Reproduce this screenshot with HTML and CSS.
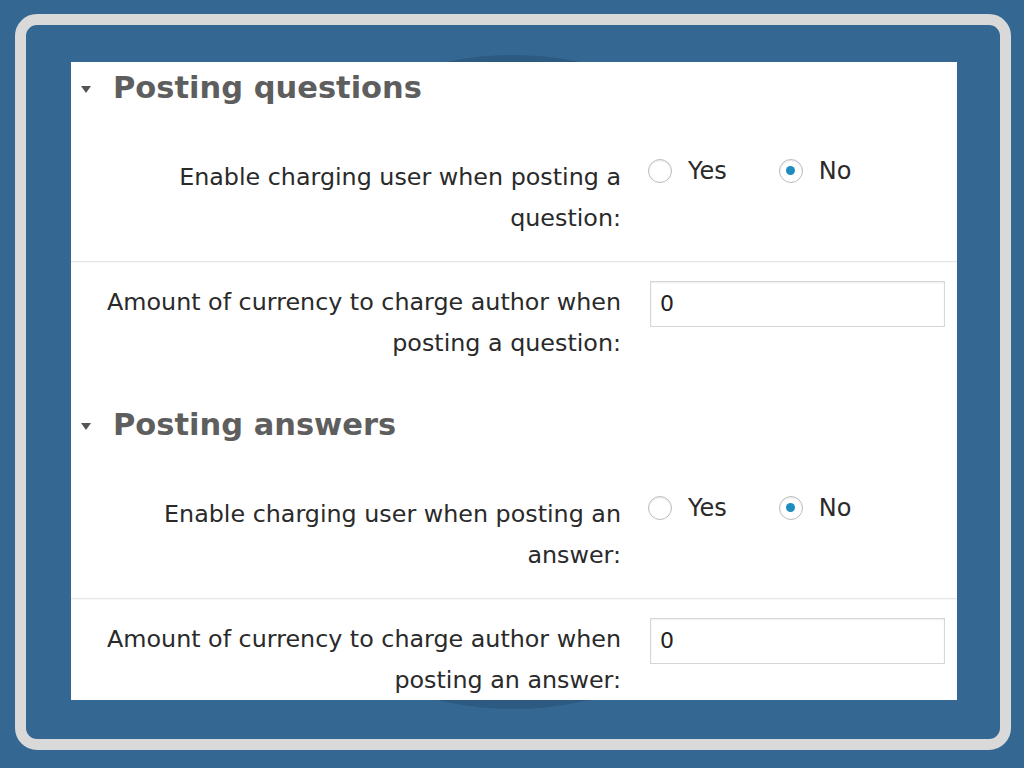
FILE: index.html
```html
<!DOCTYPE html>
<html>
<head>
<meta charset="utf-8">
<link rel="stylesheet" href="styles.css">
</head>
<body>
<div class="frame">
  <div class="disc"></div>
  <div class="panel">
    <section class="group first">
      <h2 class="group-title"><span class="caret"></span>Posting questions</h2>
      <div class="row sep">
        <div class="label">Enable charging user when posting a question:</div>
        <div class="control radios">
          <span class="opt"><span class="radio"></span>Yes</span>
          <span class="opt"><span class="radio on"></span>No</span>
        </div>
      </div>
      <div class="row">
        <div class="label">Amount of currency to charge author when posting a question:</div>
        <div class="control"><div class="input">0</div></div>
      </div>
    </section>
    <section class="group">
      <h2 class="group-title"><span class="caret"></span>Posting answers</h2>
      <div class="row sep">
        <div class="label">Enable charging user when posting an answer:</div>
        <div class="control radios">
          <span class="opt"><span class="radio"></span>Yes</span>
          <span class="opt"><span class="radio on"></span>No</span>
        </div>
      </div>
      <div class="row">
        <div class="label">Amount of currency to charge author when posting an answer:</div>
        <div class="control"><div class="input">0</div></div>
      </div>
    </section>
  </div>
</div>
</body>
</html>
```

FILE: styles.css
```css
* { box-sizing: border-box; }
html, body { margin: 0; padding: 0; }
body {
  background: #346893;
  width: 1024px;
  height: 768px;
  overflow: hidden;
  padding: 14px 0 0 15px;
  font-family: "DejaVu Sans", Verdana, sans-serif;
}
.frame {
  position: relative;
  width: 996px;
  height: 736px;
  border: 11px solid #d9d9d9;
  border-radius: 22px;
  padding: 37px 0 0 45px;
}
.disc {
  position: absolute;
  left: 160px;
  top: 30px;
  width: 654px;
  height: 654px;
  border-radius: 50%;
  background: #2d5a80;
}
.panel {
  position: relative;
  width: 886px;
  height: 638px;
  background: #fff;
  overflow: hidden;
}
.group-title {
  margin: 6px 0 29px 0;
  height: 40px;
  line-height: 40px;
  font-size: 30.5px;
  font-weight: bold;
  color: #5e5e5e;
  display: flex;
  align-items: center;
}
.group + .group .group-title { margin-top: 21px; margin-bottom: 29px; }
.caret {
  width: 0;
  height: 0;
  border-left: 5px solid transparent;
  border-right: 5px solid transparent;
  border-top: 7px solid #555;
  margin: 3px 22px 0 10px;
}
.row {
  display: grid;
  grid-template-columns: 550px 1fr;
  column-gap: 27px;
  padding: 20px 0 20px 0;
}
.row.sep {
  padding-top: 20px;
  padding-bottom: 22px;
  border-bottom: 1px solid #e6e6e6;
  box-shadow: 0 1px 1px rgba(0,0,0,0.03);
}
.label {
  text-align: right;
  font-size: 23.8px;
  line-height: 41px;
  color: #2a2a2a;
}
.control { font-size: 24px; color: #2a2a2a; }
.radios {
  display: flex;
  align-items: center;
  height: 41px;
  margin-top: -7px;
}
.opt {
  display: flex;
  align-items: center;
  margin-right: 52px;
}
.radio {
  width: 24px;
  height: 24px;
  border-radius: 50%;
  border: 1px solid #bdbdbd;
  box-shadow: inset 0 1px 2px rgba(0,0,0,0.1);
  margin-right: 16px;
  display: flex;
  align-items: center;
  justify-content: center;
}
.radio.on::after {
  content: "";
  width: 9px;
  height: 9px;
  border-radius: 50%;
  background: #1e8cbe;
}
.input {
  margin: -1px 0 0 2px;
  width: 295px;
  height: 46px;
  border: 1px solid #d6d6d6;
  box-shadow: inset 0 1px 2px rgba(0,0,0,0.07);
  padding: 0 0 0 9px;
  line-height: 44px;
  font-size: 22px;
  color: #222;
}
```
